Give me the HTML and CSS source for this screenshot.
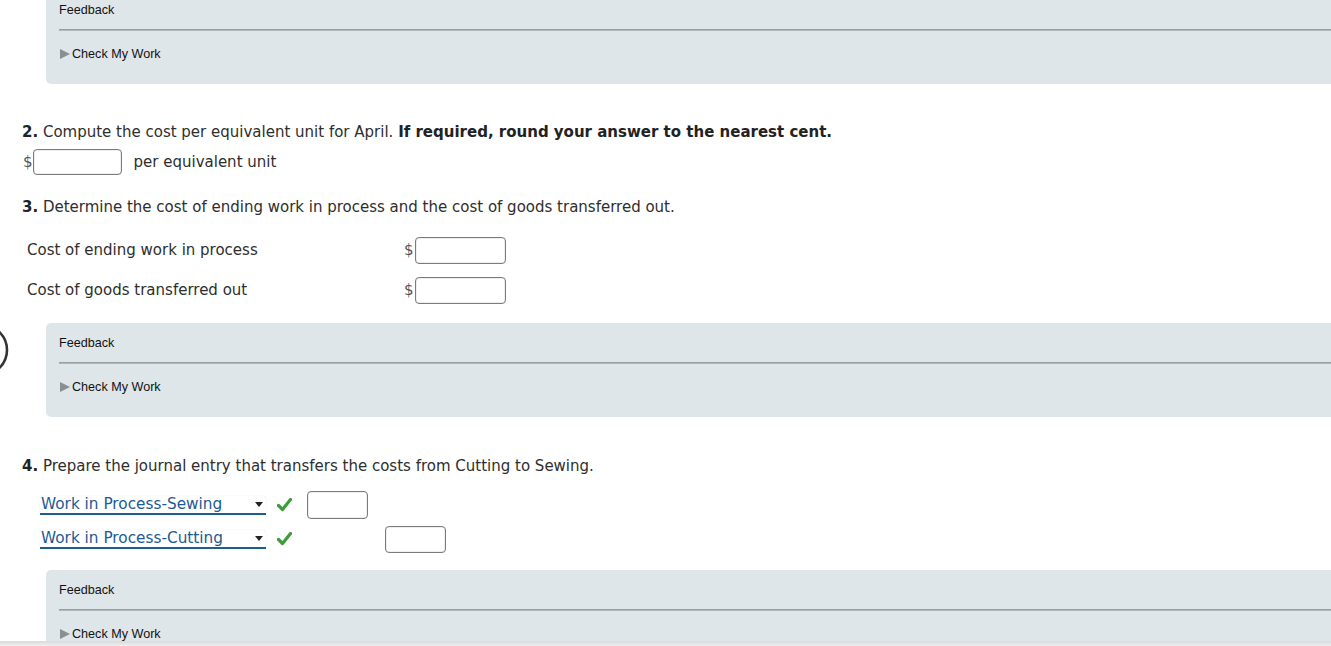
FILE: index.html
```html
<!DOCTYPE html>
<html>
<head>
<meta charset="utf-8">
<link rel="stylesheet" href="styles.css">
</head>
<body>
<div class="page">
  <div class="feedback first">
    <div class="fb-title">Feedback</div>
    <div class="fb-line"></div>
    <div class="fb-check"><span class="tri"></span>Check My Work</div>
  </div>

  <div class="question q2"><b>2.</b> Compute the cost per equivalent unit for April. <b class="strong">If required, round your answer to the nearest cent.</b></div>
  <div class="answer-row">
    <span class="dollar">$</span><span class="input w89"></span><span class="unit">per equivalent unit</span>
  </div>

  <div class="question q3"><b>3.</b> Determine the cost of ending work in process and the cost of goods transferred out.</div>
  <div class="cost-table">
    <div class="cost-row">
      <span class="cost-label">Cost of ending work in process</span>
      <span class="dollar">$</span><span class="input w90"></span>
    </div>
    <div class="cost-row">
      <span class="cost-label">Cost of goods transferred out</span>
      <span class="dollar">$</span><span class="input w90"></span>
    </div>
  </div>

  <div class="feedback second">
    <div class="fb-title">Feedback</div>
    <div class="fb-line"></div>
    <div class="fb-check"><span class="tri"></span>Check My Work</div>
  </div>

  <div class="question q4"><b>4.</b> Prepare the journal entry that transfers the costs from Cutting to Sewing.</div>
  <div class="journal">
    <div class="j-row">
      <div class="select"><span>Work in Process-Sewing</span><svg class="arrow" width="8" height="5" viewBox="0 0 8 5"><path d="M0 0H8L4 5Z" fill="#222"/></svg></div>
      <svg class="check" width="15" height="14" viewBox="0 0 15 14"><path d="M1.5 7.5L5.5 11.5L13.5 1.5" fill="none" stroke="#3c9d3c" stroke-width="3.2" stroke-linecap="round" stroke-linejoin="round"/></svg>
      <span class="input j-debit"></span>
    </div>
    <div class="j-row">
      <div class="select"><span>Work in Process-Cutting</span><svg class="arrow" width="8" height="5" viewBox="0 0 8 5"><path d="M0 0H8L4 5Z" fill="#222"/></svg></div>
      <svg class="check" width="15" height="14" viewBox="0 0 15 14"><path d="M1.5 7.5L5.5 11.5L13.5 1.5" fill="none" stroke="#3c9d3c" stroke-width="3.2" stroke-linecap="round" stroke-linejoin="round"/></svg>
      <span class="input j-credit"></span>
    </div>
  </div>

  <div class="feedback third">
    <div class="fb-title">Feedback</div>
    <div class="fb-line"></div>
    <div class="fb-check"><span class="tri"></span>Check My Work</div>
  </div>
</div>
<svg class="nav-circle" width="12" height="60" viewBox="0 0 12 60"><circle cx="-18" cy="30" r="25" fill="none" stroke="#333" stroke-width="2.6"/></svg>
<div class="hscroll"></div>
</body>
</html>
```

FILE: styles.css
```css
html, body {
  margin: 0;
  padding: 0;
  background: #fff;
  overflow: hidden;
}
body {
  font-family: "DejaVu Sans", Verdana, sans-serif;
  color: #2e2e2e;
}
.page {
  padding-left: 22px;
  margin-top: -10px;
}
.feedback {
  margin-left: 24px;
  margin-right: -10px;
  background: #dfe6e9;
  border-radius: 5px;
  padding: 12px 0 22px 13px;
  font-family: "Liberation Sans", Arial, sans-serif;
  font-size: 12.6px;
  color: #111;
}
.fb-title {
  line-height: 16px;
}
.fb-line {
  margin-top: 11px;
  height: 1px;
  background: #98a0a3;
  border-bottom: 0.5px solid #b0b6b9;
}
.fb-check {
  margin-top: 15px;
  line-height: 16px;
  display: flex;
  align-items: center;
}
.tri {
  width: 0;
  height: 0;
  border-top: 5px solid transparent;
  border-bottom: 5px solid transparent;
  border-left: 10px solid #8a8f91;
  margin: 0 2px 0 1px;
}
.question {
  font-size: 15px;
  line-height: 20px;
  color: #2e2e2e;
}
.question b {
  color: #222;
}
.q2 { margin-top: 38px; }
.q3 { margin-top: 22px; }
.q4 { margin-top: 39px; }
.answer-row {
  margin-top: 7px;
  display: flex;
  align-items: center;
  font-size: 15px;
  height: 26px;
}
.dollar {
  font-size: 15px;
  color: #555;
}
.answer-row .dollar {
  margin-left: 1px;
}
.input {
  display: inline-block;
  box-sizing: border-box;
  height: 26px;
  border: 1px solid #7b7b7b;
  border-radius: 4px;
  background: #fff;
  box-shadow: inset 0 0 0 0.5px #ddd;
}
.w89 { width: 89px; margin-left: 0; }
.unit { margin-left: 12px; }
.cost-table {
  margin-top: 13px;
}
.cost-row {
  display: flex;
  align-items: center;
  height: 40px;
  font-size: 15px;
}
.cost-label {
  width: 377px;
  padding-left: 5px;
}
.w90 { width: 91px; height: 27px; margin-left: 1px; }
.second { margin-top: 13px; }
.journal {
  margin-top: 15px;
  padding-left: 18px;
}
.j-row {
  display: flex;
  align-items: center;
  height: 28px;
}
.j-row + .j-row {
  margin-top: 6px;
}
.select {
  box-sizing: border-box;
  width: 226px;
  height: 19px;
  display: flex;
  align-items: center;
  justify-content: space-between;
  padding: 0 3px 0 1px;
  background: #fff;
  border-radius: 4px 4px 0 0;
  border-bottom: 2px solid #1e5e8e;
  box-shadow: 0 0 1px #ccc;
  color: #1d5a92;
  font-size: 15.3px;
  line-height: 17px;
}
.check {
  margin-left: 11px;
}
.j-debit {
  width: 61px;
  height: 28px;
  margin-left: 15px;
}
.j-credit {
  width: 61px;
  height: 27px;
  margin-left: 93px;
}
.third { margin-top: 17px; height: 100px; }
.nav-circle {
  position: absolute;
  left: 0;
  top: 320px;
}
.hscroll {
  position: fixed;
  left: 0;
  right: 0;
  bottom: 0;
  height: 5px;
  background: linear-gradient(#d9d9d9, #efefef);
}
```
